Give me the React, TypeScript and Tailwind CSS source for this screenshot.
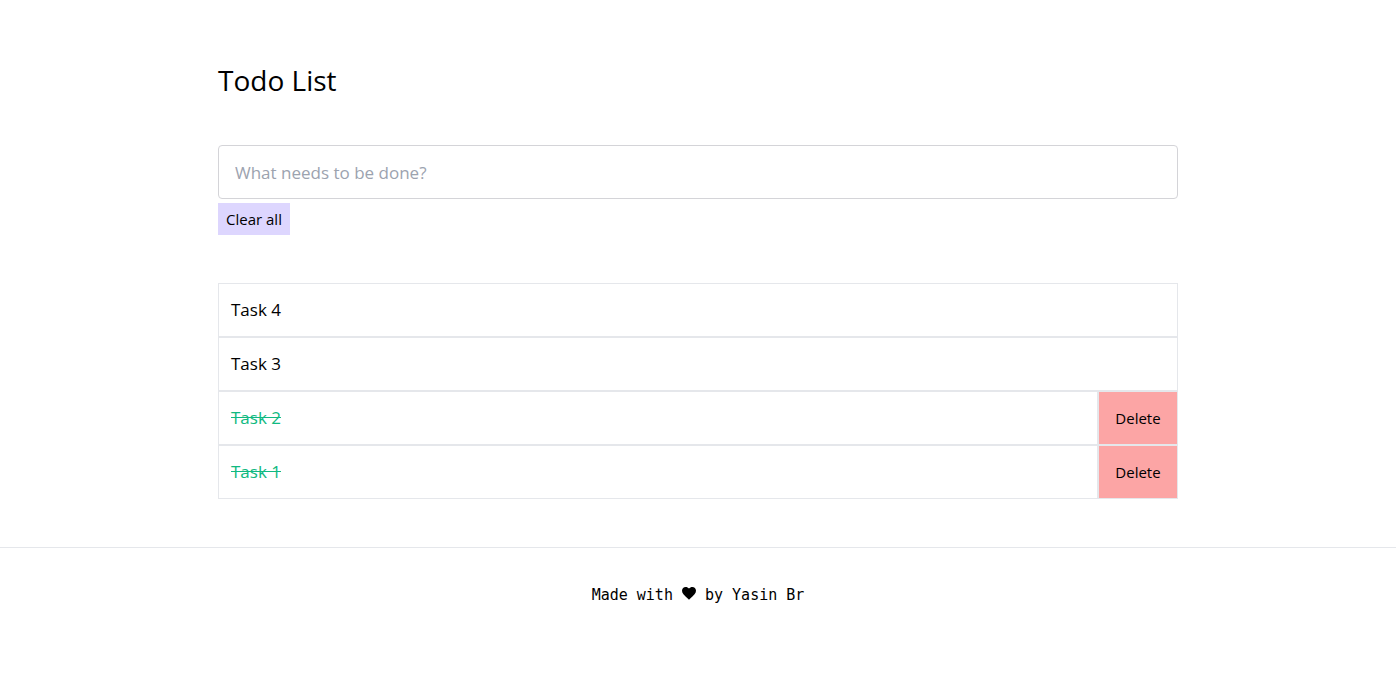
import { useState } from 'react';

type Todo = { id: number; text: string; done: boolean };

const initial: Todo[] = [
  { id: 4, text: 'Task 4', done: false },
  { id: 3, text: 'Task 3', done: false },
  { id: 2, text: 'Task 2', done: true },
  { id: 1, text: 'Task 1', done: true },
];

export default function App() {
  const [todos, setTodos] = useState<Todo[]>(initial);
  const [value, setValue] = useState('');

  return (
    <div className="min-h-screen bg-white text-black font-['Open_Sans','Noto_Sans',sans-serif]">
      <main className="mx-auto w-[960px] pt-[62px]">
        <h1 className="text-[28px] leading-9 font-normal">Todo List</h1>

        <form
          className="mt-[47px]"
          onSubmit={(e) => {
            e.preventDefault();
            if (!value.trim()) return;
            setTodos([{ id: Date.now(), text: value, done: false }, ...todos]);
            setValue('');
          }}
        >
          <input
            value={value}
            onChange={(e) => setValue(e.target.value)}
            placeholder="What needs to be done?"
            className="w-full h-[54px] px-4 text-[17px] border border-[#d4d4d8] rounded placeholder:text-[#9ca3af] outline-none"
          />
        </form>
        <button
          onClick={() => setTodos([])}
          className="mt-1 h-8 px-2 bg-[#ddd6fe] text-[15px]"
        >
          Clear all
        </button>

        <ul className="mt-12">
          {todos.map((t) => (
            <li key={t.id} className="flex h-[54px] border border-[#e5e7eb]">
              <span
                onClick={() =>
                  setTodos(todos.map((x) => (x.id === t.id ? { ...x, done: !x.done } : x)))
                }
                className={`flex-1 flex items-center px-3 text-[17px] cursor-pointer ${
                  t.done ? 'line-through text-[#10b981]' : ''
                }`}
              >
                {t.text}
              </span>
              {t.done && (
                <button
                  onClick={() => setTodos(todos.filter((x) => x.id !== t.id))}
                  className="w-[80px] bg-[#fca5a5] border-l-2 border-[#e5e7eb] text-[15px]"
                >
                  Delete
                </button>
              )}
            </li>
          ))}
        </ul>
      </main>

      <footer className="mt-12 border-t border-[#e5e7eb] pt-9 text-center text-[15px] font-['DejaVu_Sans_Mono',monospace]">
        Made with{' '}
        <svg viewBox="0 0 24 22" className="inline-block w-[14px] h-[13px] -mt-1 align-middle" fill="black">
          <path d="M12 21.5 10.3 20C4.2 14.5 0 10.8 0 6.3 0 2.7 2.8 0 6.3 0c2.2 0 4.3 1 5.7 2.6C13.4 1 15.5 0 17.7 0 21.2 0 24 2.7 24 6.3c0 4.5-4.2 8.2-10.3 13.7L12 21.5z" />
        </svg>{' '}
        by Yasin Br
      </footer>
    </div>
  );
}
